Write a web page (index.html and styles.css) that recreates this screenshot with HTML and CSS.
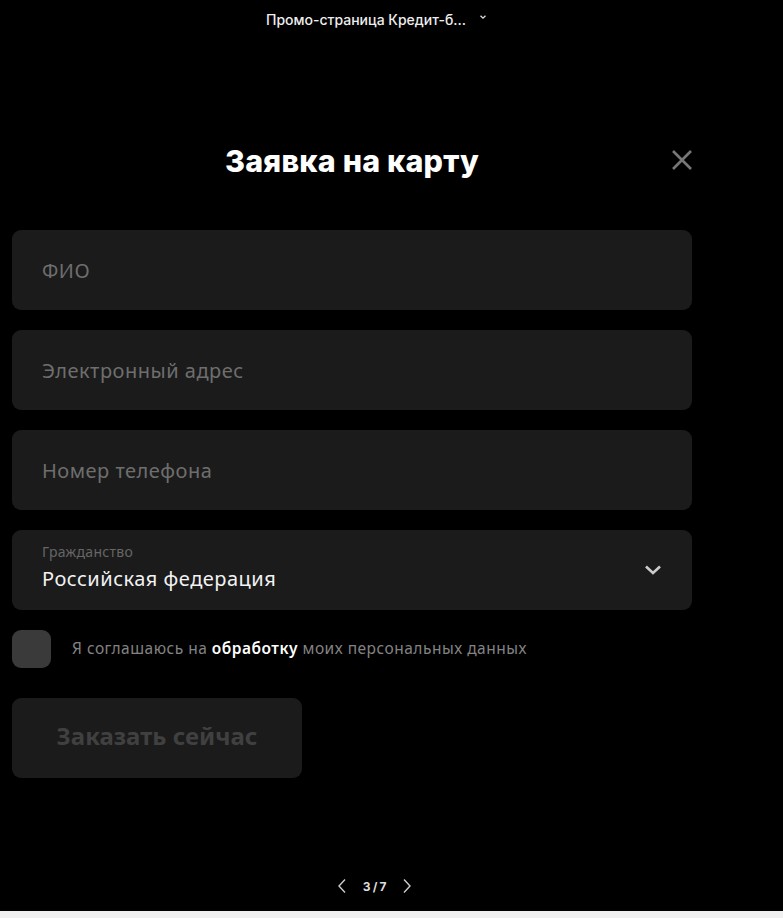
FILE: index.html
```html
<!DOCTYPE html>
<html lang="ru">
<head>
<meta charset="utf-8">
<link rel="stylesheet" href="styles.css">
</head>
<body>
<div class="screen">
  <header class="topbar">
    <span class="topbar-title">Промо-страница Кредит-б...</span>
    <svg class="topbar-chev" width="8" height="6" viewBox="0 0 8 6"><path d="M1.5 1.8 L4 4.2 L6.5 1.8" fill="none" stroke="#ddd" stroke-width="1.3"/></svg>
  </header>
  <main class="form">
    <div class="head">
      <h1 class="title">Заявка на карту</h1>
      <svg class="close" width="22" height="22" viewBox="0 0 22 22"><path d="M2 2 L20 20 M20 2 L2 20" stroke="#777" stroke-width="2.6"/></svg>
    </div>
    <div class="field"><span class="placeholder">ФИО</span></div>
    <div class="field"><span class="placeholder">Электронный адрес</span></div>
    <div class="field"><span class="placeholder">Номер телефона</span></div>
    <div class="field select">
      <div class="select-text">
        <span class="label">Гражданство</span>
        <span class="value">Российская федерация</span>
      </div>
      <svg class="select-chev" width="18" height="12" viewBox="0 0 18 12"><path d="M2 2.5 L9 9 L16 2.5" fill="none" stroke="#ccc" stroke-width="2.6"/></svg>
    </div>
    <label class="agree">
      <span class="checkbox"></span>
      <span class="agree-text">Я соглашаюсь на <b>обработку</b> моих персональных данных</span>
    </label>
    <button class="submit">Заказать сейчас</button>
  </main>
  <footer class="pager">
    <svg width="10" height="16" viewBox="0 0 10 16"><path d="M8 1.5 L2 8 L8 14.5" fill="none" stroke="#ccc" stroke-width="1.4"/></svg>
    <span class="pager-num">3 / 7</span>
    <svg width="10" height="16" viewBox="0 0 10 16"><path d="M2 1.5 L8 8 L2 14.5" fill="none" stroke="#ccc" stroke-width="1.4"/></svg>
  </footer>
</div>
</body>
</html>
```
FILE: styles.css
```css
* { box-sizing: border-box; }
html, body { margin: 0; padding: 0; background: #f0f0f0; }
body { font-family: "Noto Sans", "Inter", sans-serif; }
.screen {
  width: 783px;
  height: 911px;
  background: #000;
  position: relative;
  display: flex;
  flex-direction: column;
}
.topbar {
  height: 40px;
  display: flex;
  align-items: center;
  padding-left: 266px;
  padding-bottom: 2px;
  gap: 13px;
}
.topbar-title {
  color: #eee;
  font-family: "Inter", sans-serif;
  font-size: 14px;
  font-weight: 500;
}
.topbar-chev { margin-top: -4px; }
.form {
  width: 680px;
  margin-left: 12px;
  display: flex;
  flex-direction: column;
  gap: 20px;
}
.head {
  position: relative;
  height: 170px;
  display: flex;
  align-items: flex-start;
  justify-content: center;
  padding-top: 102px;
}
.title {
  margin: 0;
  color: #fff;
  font-family: "Inter", sans-serif;
  font-weight: 800;
  font-size: 30.4px;
  line-height: 38px;
  letter-spacing: 0.2px;
}
.close { position: absolute; right: -1px; top: 109px; }
.field {
  height: 80px;
  background: #1b1b1b;
  border-radius: 9px;
  display: flex;
  align-items: center;
  padding: 0 30px;
}
.placeholder { color: #6e6e6e; font-size: 20px; letter-spacing: 0.5px; }
.select { justify-content: space-between; padding-right: 30px; }
.select-text { display: flex; flex-direction: column; gap: 4px; margin-top: -7px; }
.label { color: #666; font-size: 14px; letter-spacing: 0.3px; line-height: 19px; }
.value { color: #f2f2f2; font-size: 20px; letter-spacing: 0.5px; line-height: 27px; }
.agree { display: flex; align-items: center; gap: 21px; height: 38px; }
.checkbox { width: 39px; height: 38px; border-radius: 9px; background: #3a3a3a; }
.agree-text { color: #838383; font-size: 15.5px; letter-spacing: 0.5px; margin-top: -2px; }
.agree-text b { color: #fff; font-weight: 600; }
.submit {
  width: 290px;
  height: 80px;
  margin-top: 10px;
  border: 0;
  border-radius: 9px;
  background: #1b1b1b;
  color: #404040;
  font-family: "Noto Sans", sans-serif;
  font-weight: 700;
  font-size: 24px;
  padding: 0 0 6px;
}
.pager {
  position: absolute;
  left: 0; right: 0; top: 878px;
  display: flex;
  justify-content: center;
  align-items: center;
  gap: 16px;
  padding-right: 34px;
}
.pager-num { color: #ddd; font-size: 12px; font-weight: 700; font-family: "Inter", sans-serif; letter-spacing: -0.3px; }
```
